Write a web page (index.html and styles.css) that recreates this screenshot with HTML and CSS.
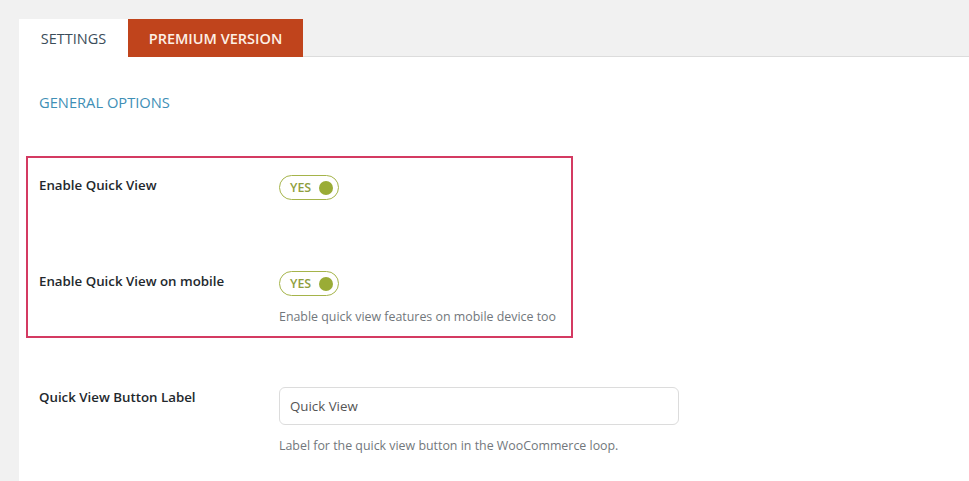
FILE: index.html
```html
<!DOCTYPE html>
<html lang="en">
<head>
    <meta charset="UTF-8">
    <title>Quick View Settings</title>
    <link rel="stylesheet" href="styles.css">
</head>
<body>
    <div class="wrap">
        <div class="tabs">
            <a class="tab tab-active">SETTINGS</a>
            <a class="tab tab-premium">PREMIUM VERSION</a>
            <span class="tab-fill"></span>
        </div>

        <div class="panel">
            <h2 class="section-title">GENERAL OPTIONS</h2>

            <div class="highlight">
                <div class="row row-first">
                    <label class="row-label">Enable Quick View</label>
                    <div class="row-field">
                        <span class="toggle">YES <i class="knob"></i></span>
                    </div>
                </div>

                <div class="row row-second">
                    <label class="row-label">Enable Quick View on mobile</label>
                    <div class="row-field">
                        <span class="toggle">YES <i class="knob"></i></span>
                        <p class="desc">Enable quick view features on mobile device too</p>
                    </div>
                </div>
            </div>

            <div class="row row-input">
                <label class="row-label">Quick View Button Label</label>
                <div class="row-field">
                    <input class="text-input" type="text" value="Quick View">
                    <p class="desc">Label for the quick view button in the WooCommerce loop.</p>
                </div>
            </div>
        </div>
    </div>
</body>
</html>
```

FILE: styles.css
```css
* {
    margin: 0;
    padding: 0;
    box-sizing: border-box;
}

body {
    font-family: 'Open Sans', 'Noto Sans', sans-serif;
    background: #f1f1f1;
    color: #23282d;
    overflow: hidden;
}

.wrap {
    padding: 19px 0 0 19px;
}

/* tabs */
.tabs {
    display: flex;
    height: 38px;
}

.tab {
    display: flex;
    align-items: center;
    justify-content: center;
    font-size: 14.5px;
    height: 38px;
}

.tab-active {
    width: 109px;
    background: #fff;
    color: #3b4d5a;
}

.tab-premium {
    width: 175px;
    background: #c0441c;
    color: #fdf0e6;
    font-weight: 600;
}

.tab-fill {
    flex: 1;
    border-bottom: 1px solid #dcdcdc;
}

/* panel */
.panel {
    background: #fff;
    min-height: 440px;
    padding: 35px 20px 0 20px;
}

.section-title {
    font-size: 14.7px;
    font-weight: 400;
    color: #3f8fb6;
    line-height: 20px;
    margin-bottom: 44px;
}

.highlight {
    width: 547px;
    margin-left: -13px;
    border: 2px solid #d43a62;
    padding: 17px 0 10px 11px;
}

.row {
    display: grid;
    grid-template-columns: 240px 1fr;
    align-items: start;
}

.row-second {
    margin-top: 71px;
}

.row-input {
    margin-top: 49px;
}

.row-label {
    font-size: 13.3px;
    font-weight: 600;
    line-height: 20px;
    color: #23282d;
}

.toggle {
    display: inline-flex;
    align-items: center;
    justify-content: space-between;
    width: 60px;
    height: 25px;
    border: 1px solid #a5b44a;
    border-radius: 13px;
    padding: 0 5px 0 10px;
    font-size: 12.5px;
    font-weight: 600;
    color: #8f9e3d;
}

.knob {
    width: 14px;
    height: 14px;
    border-radius: 50%;
    background: #9aac36;
}

.desc {
    font-size: 12.4px;
    line-height: 18px;
    color: #72777c;
    margin-top: 12px;
}

.text-input {
    width: 400px;
    height: 38px;
    border: 1px solid #dcdcdc;
    border-radius: 6px;
    padding: 0 10px;
    font-family: inherit;
    font-size: 13.3px;
    color: #555;
    outline: none;
}
```
